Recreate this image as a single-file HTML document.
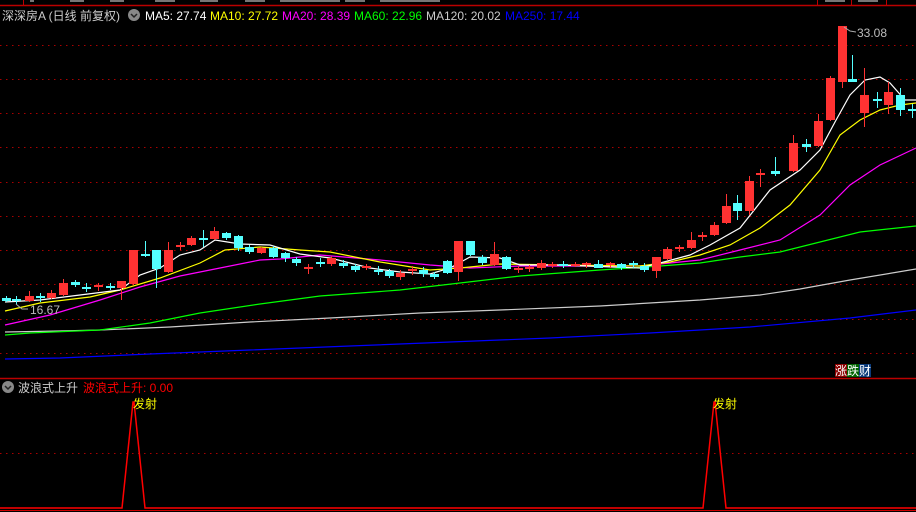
<!DOCTYPE html>
<html><head><meta charset="utf-8"><style>
html,body{margin:0;padding:0;background:#000;width:916px;height:512px;overflow:hidden}
svg{display:block}
text{font-family:"Liberation Sans","Noto Sans CJK SC",sans-serif;font-size:12px}
</style></head><body>
<svg width="916" height="512" viewBox="0 0 916 512" xmlns="http://www.w3.org/2000/svg">
<rect width="916" height="512" fill="#000"/>
<line x1="0" y1="5.5" x2="916" y2="5.5" stroke="#b00" stroke-width="1.5"/>
<line x1="23.5" y1="0" x2="23.5" y2="5" stroke="#b00"/>
<line x1="817.5" y1="0" x2="817.5" y2="5" stroke="#b00"/>
<line x1="851.5" y1="0" x2="851.5" y2="5" stroke="#b00"/>
<line x1="886.5" y1="0" x2="886.5" y2="5" stroke="#b00"/>
<g fill="#777"><rect x="30" y="0" width="4" height="2"/><rect x="70" y="0" width="14" height="2"/><rect x="110" y="0" width="14" height="2"/><rect x="155" y="0" width="20" height="2"/><rect x="200" y="0" width="18" height="2"/><rect x="245" y="0" width="20" height="2"/><rect x="280" y="0" width="60" height="2"/><rect x="345" y="0" width="20" height="2"/><rect x="380" y="0" width="60" height="2"/><rect x="825" y="0" width="20" height="2"/><rect x="858" y="0" width="20" height="2"/></g>
<g stroke="#a00" stroke-dasharray="1.5,4.5" stroke-width="1">
<line x1="0" y1="45.5" x2="916" y2="45.5"/><line x1="0" y1="79.5" x2="916" y2="79.5"/><line x1="0" y1="113.5" x2="916" y2="113.5"/><line x1="0" y1="147.5" x2="916" y2="147.5"/><line x1="0" y1="182.5" x2="916" y2="182.5"/><line x1="0" y1="216.5" x2="916" y2="216.5"/><line x1="0" y1="250.5" x2="916" y2="250.5"/><line x1="0" y1="284.5" x2="916" y2="284.5"/><line x1="0" y1="319.5" x2="916" y2="319.5"/><line x1="0" y1="353.5" x2="916" y2="353.5"/>
<line x1="0" y1="453.5" x2="916" y2="453.5"/>
</g>
<g fill="none" stroke-width="1.2">
<polyline stroke="#00f" points="5,359 60,358 150,354 250,350 350,346 450,342 550,338 650,333 750,327 850,318 916,310"/>
<polyline stroke="#ccc" points="5,332 60,331 100,330 170,327 250,322 330,318 420,313 500,310 600,306 700,300 760,295 800,289 850,280 916,269"/>
<polyline stroke="#0f0" points="5,335 30,333 100,330 150,323 200,313 260,304 320,296 400,290 460,283 520,276 600,270 660,266 700,263 740,257 780,252 820,242 860,232 916,226"/>
<polyline stroke="#f0f" points="5,325 50,315 100,300 140,287 180,276 220,268 260,260 280,259 320,255 380,260 430,265 470,268 520,266 640,266 670,263 700,260 740,250 780,240 820,215 850,185 880,165 916,148"/>
<polyline stroke="#ff0" points="5,311 40,303 90,297 120,290 160,278 200,263 225,250 260,247 300,250 330,252 380,262 430,270 460,268 500,264 560,265 640,266 670,262 700,255 730,245 760,228 790,205 820,170 840,135 860,120 880,110 900,105 916,103"/>
<polyline stroke="#fff" points="5,302 40,300 80,295 120,290 140,275 160,268 180,255 200,250 215,240 240,244 270,245 300,254 330,258 370,268 400,272 430,274 450,268 470,257 500,258 520,265 560,265 640,268 660,263 690,255 710,245 740,228 770,190 800,170 820,150 835,122 850,95 865,80 880,77 890,83 905,100 916,100"/>
</g>
<!-- red candles -->
<path stroke="#ff3232" stroke-width="1" fill="none" d="M29.5,291V302M51.5,290V299M63.5,279V296M98.5,283V291M121.5,281V300M133.5,250V285M168.5,242V273M180.5,242V250M191.5,236V246M214.5,227V240M261.5,247V254M308.5,264V274M331.5,256V266M366.5,264V270M400.5,270V280M412.5,266V275M458.5,241V281M494.5,242V266M518.5,266V273M529.5,265V272M541.5,260V270M552.5,262V268M575.5,262V267M586.5,262V268M610.5,262V268M656.5,257V278M667.5,247V260M679.5,245V252M691.5,232V249M702.5,232V241M714.5,222V236M726.5,194V224M749.5,176V215M760.5,169V187M793.5,135V172M818.5,114V147M830.5,76V121M842.5,26V88M864.5,68V127M888.5,82V114"/>
<g fill="#ff3232">
<rect x="25" y="296" width="9" height="5"/><rect x="47" y="293" width="9" height="5"/><rect x="59" y="283" width="9" height="12"/><rect x="94" y="285" width="9" height="2"/><rect x="117" y="281" width="9" height="7"/><rect x="129" y="250" width="9" height="34"/><rect x="164" y="250" width="9" height="22"/><rect x="176" y="245" width="9" height="2"/><rect x="187" y="238" width="9" height="7"/><rect x="210" y="231" width="9" height="8"/><rect x="257" y="248" width="9" height="5"/><rect x="304" y="267" width="9" height="2"/><rect x="327" y="258" width="9" height="6"/><rect x="362" y="266" width="9" height="2"/><rect x="396" y="273" width="9" height="4"/><rect x="408" y="269" width="9" height="2"/><rect x="454" y="241" width="9" height="31"/><rect x="490" y="254" width="9" height="11"/><rect x="514" y="268" width="9" height="2"/><rect x="525" y="267" width="9" height="2"/><rect x="537" y="263" width="9" height="5"/><rect x="548" y="264" width="9" height="2"/><rect x="571" y="264" width="9" height="2"/><rect x="582" y="263" width="9" height="2"/><rect x="606" y="263" width="9" height="2"/><rect x="652" y="257" width="9" height="14"/><rect x="663" y="249" width="9" height="10"/><rect x="675" y="247" width="9" height="2"/><rect x="687" y="240" width="9" height="8"/><rect x="698" y="235" width="9" height="2"/><rect x="710" y="225" width="9" height="10"/><rect x="722" y="206" width="9" height="17"/><rect x="745" y="181" width="9" height="30"/><rect x="756" y="173" width="9" height="2"/><rect x="789" y="143" width="9" height="28"/><rect x="814" y="121" width="9" height="25"/><rect x="826" y="78" width="9" height="42"/><rect x="838" y="26" width="9" height="56"/><rect x="860" y="95" width="9" height="18"/><rect x="884" y="92" width="9" height="13"/>
</g>
<!-- cyan candles -->
<path stroke="#54ffff" stroke-width="1" fill="none" d="M6.5,296V302M16.5,296V304M40.5,293V302M75.5,280V287M86.5,283V292M110.5,283V290M145.5,241V257M156.5,250V288M203.5,230V247M226.5,232V240M238.5,235V251M249.5,245V254M273.5,246V258M285.5,252V262M296.5,257V266M320.5,258V267M343.5,260V268M355.5,264V272M378.5,266V275M389.5,269V278M423.5,267V277M434.5,272V279M447.5,260V274M470.5,241V256M482.5,255V265M506.5,256V270M563.5,261V268M598.5,260V268M621.5,263V270M633.5,261V268M644.5,263V272M737.5,195V220M775.5,157V176M806.5,139V152M852.5,55V82M877.5,92V108M900.5,88V116M912.5,104V118"/>
<g fill="#54ffff">
<rect x="2" y="298" width="9" height="3"/><rect x="12" y="299" width="9" height="2"/><rect x="36" y="296" width="9" height="2"/><rect x="71" y="282" width="9" height="3"/><rect x="82" y="287" width="9" height="2"/><rect x="106" y="286" width="9" height="2"/><rect x="141" y="254" width="9" height="2"/><rect x="152" y="250" width="9" height="19"/><rect x="199" y="238" width="9" height="2"/><rect x="222" y="233" width="9" height="5"/><rect x="234" y="236" width="9" height="12"/><rect x="245" y="247" width="9" height="5"/><rect x="269" y="248" width="9" height="9"/><rect x="281" y="253" width="9" height="5"/><rect x="292" y="259" width="9" height="4"/><rect x="316" y="262" width="9" height="2"/><rect x="339" y="263" width="9" height="3"/><rect x="351" y="266" width="9" height="4"/><rect x="374" y="270" width="9" height="2"/><rect x="385" y="271" width="9" height="5"/><rect x="419" y="270" width="9" height="4"/><rect x="430" y="274" width="9" height="3"/><rect x="443" y="261" width="9" height="12"/><rect x="466" y="241" width="9" height="14"/><rect x="478" y="257" width="9" height="6"/><rect x="502" y="257" width="9" height="12"/><rect x="559" y="264" width="9" height="2"/><rect x="594" y="264" width="9" height="4"/><rect x="617" y="264" width="9" height="4"/><rect x="629" y="263" width="9" height="2"/><rect x="640" y="266" width="9" height="4"/><rect x="733" y="203" width="9" height="8"/><rect x="771" y="171" width="9" height="3"/><rect x="802" y="144" width="9" height="3"/><rect x="848" y="79" width="9" height="3"/><rect x="873" y="99" width="9" height="2"/><rect x="896" y="95" width="9" height="15"/><rect x="908" y="109" width="9" height="2"/>
</g>
<polyline points="16,304 22,309 28,309" fill="none" stroke="#aaa"/>
<text x="30" y="314" fill="#bbb">16.67</text>
<polyline points="844,27 850,31 856,32" fill="none" stroke="#aaa"/>
<text x="857" y="37" fill="#bbb">33.08</text>
<text x="2" y="20" fill="#ccc" font-size="12.5">深深房A (日线 前复权)</text>
<circle cx="134" cy="15" r="6" fill="#888"/><path d="M131,14 L134,17 L137,14" stroke="#222" stroke-width="1.5" fill="none"/>
<text x="145" y="20" fill="#fff">MA5: 27.74</text>
<text x="210" y="20" fill="#ff0">MA10: 27.72</text>
<text x="282" y="20" fill="#f0f">MA20: 28.39</text>
<text x="354" y="20" fill="#0f0">MA60: 22.96</text>
<text x="426" y="20" fill="#ccc">MA120: 20.02</text>
<text x="505" y="20" fill="#00f">MA250: 17.44</text>
<rect x="835" y="364" width="12" height="13" fill="#8b0000"/><rect x="847" y="364" width="12" height="13" fill="#006400"/><rect x="859" y="364" width="12" height="13" fill="#0a3a7a"/>
<text x="835" y="375" fill="#fff">涨跌财</text>
<line x1="0" y1="378.5" x2="916" y2="378.5" stroke="#b00" stroke-width="1.5"/>
<circle cx="8" cy="387" r="6" fill="#888"/><path d="M5,386 L8,389 L11,386" stroke="#222" stroke-width="1.5" fill="none"/>
<text x="18" y="392" fill="#ccc">波浪式上升</text>
<text x="83" y="392" fill="#f00">波浪式上升: 0.00</text>
<polyline points="0,508 122,508 133,402 134,402 145,508 703,508 714,402 715,402 726,508 916,508" fill="none" stroke="#f00" stroke-width="1.5"/>
<line x1="0" y1="510.5" x2="916" y2="510.5" stroke="#c00" stroke-width="1"/>
<text x="133" y="408" fill="#ff0">发射</text>
<text x="713" y="408" fill="#ff0">发射</text>
</svg>
</body></html>
